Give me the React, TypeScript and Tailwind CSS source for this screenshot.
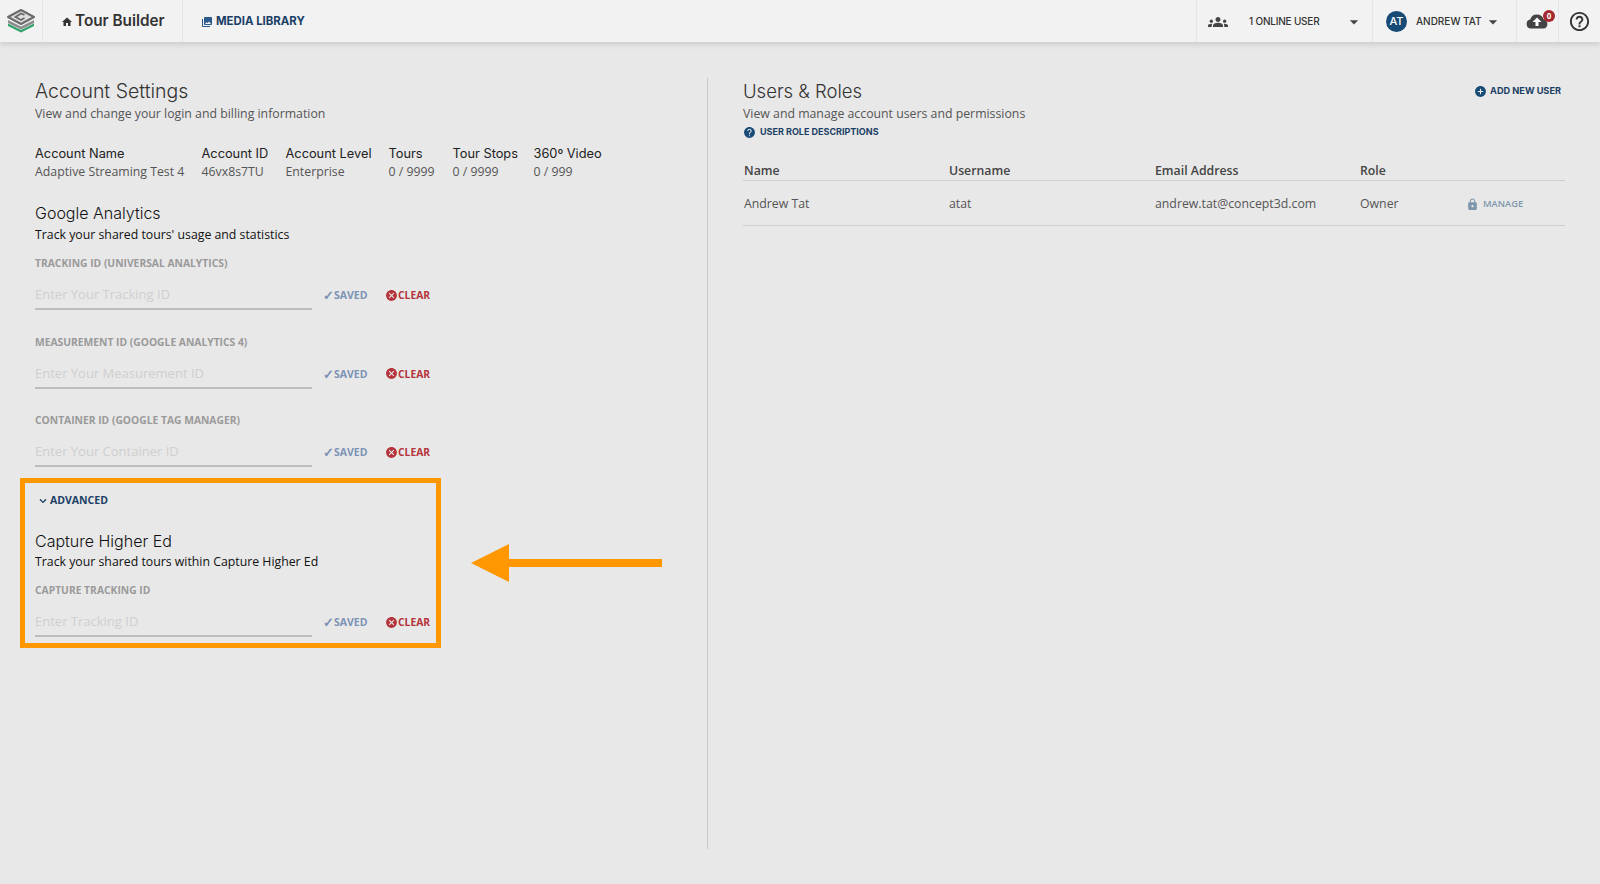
import React from "react";
import { MdHome, MdPhotoLibrary, MdGroups, MdArrowDropDown, MdAddCircle, MdHelp, MdLock, MdCancel, MdHelpOutline } from "react-icons/md";
import { FaChevronDown } from "react-icons/fa";

const OPEN = "font-['Open_Sans',sans-serif]";
const HEAD = "font-['Inter',sans-serif]";

function Logo() {
  return (
    <svg width="28" height="24" viewBox="0 0 28 24">
      <path d="M1 14.5 14 21l13-6.500V17L14 23.500 1 17z" fill="#2fa36b" />
      <path d="M1 11 14 17.500 27 11v3L14 20.500 1 14z" fill="#8d8d8d" />
      <path d="M14 1 27 8 14 15 1 8z" fill="#dfdfdf" stroke="#6a6a6a" strokeWidth="2" strokeLinejoin="round" />
      <path d="M17.500 6 14 4.500 8.500 8l5.500 3 3.500-2" fill="none" stroke="#6a6a6a" strokeWidth="1.800" />
    </svg>
  );
}

function Stat({ label, value, className }: { label: string; value: string; className: string }) {
  return (
    <div className={className}>
      <div className={`${HEAD} text-[12.800px] leading-[18px] text-[#222]`}>{label}</div>
      <div className={`${OPEN} text-[12.300px] leading-[18px] text-[#555]`}>{value}</div>
    </div>
  );
}

function Field({ label, placeholder }: { label: string; placeholder: string }) {
  return (
    <div>
      <div className={`${OPEN} text-[10.300px] leading-[14px] font-bold text-[#9a9a9a]`}>{label}</div>
      <div className="flex items-end mt-[12px]">
        <div className={`${OPEN} w-[277px] h-[28px] border-b-2 border-[#bdbdbd] text-[13px] leading-[25px] text-[#cfcfcf]`}>{placeholder}</div>
        <div className={`${OPEN} flex items-center ml-[11px] mb-[8px] w-[62px] text-[10.500px] leading-[14px] font-bold text-[#7c93b5]`}>
          <span className="text-[13px] leading-[14px]">✓</span>SAVED
        </div>
        <div className={`${OPEN} flex items-center mb-[8px] text-[10.300px] leading-[14px] font-bold text-[#b5343c]`}>
          <MdCancel size={13} />CLEAR
        </div>
      </div>
    </div>
  );
}

export default function App() {
  return (
    <div className="relative h-[884px] bg-[#e8e8e8] overflow-hidden flex flex-col">
      <header className="h-[42px] shrink-0 bg-[#f2f2f2] shadow-[0_2px_6px_rgba(0,0,0,0.14)] flex items-stretch">
        <div className="w-[43px] border-r border-[#e6e6e6] flex items-center justify-center pr-[1px]"><Logo /></div>
        <div className={`${HEAD} w-[140px] border-r border-[#e6e6e6] flex items-center pl-[18px] pt-[1px] text-[15.300px] font-semibold text-[#333]`}>
          <MdHome size={12} className="mr-[2px]" />Tour Builder
        </div>
        <div className={`${HEAD} flex items-center pl-[18px] pt-[2px] text-[11.400px] font-bold text-[#1c3f66]`}>
          <MdPhotoLibrary size={12} className="mr-[3px] text-[#2a5b8c]" />MEDIA LIBRARY
        </div>
        <div className="flex-1" />
        <div className={`${HEAD} w-[176px] border-l border-[#e6e6e6] flex items-center pl-[11px] pt-[1px] text-[10px] tracking-[-0.2px] font-medium text-[#333]`}>
          <MdGroups size={20} className="text-[#444]" />
          <span className="ml-[21px]">1 ONLINE USER</span>
          <MdArrowDropDown size={20} className="ml-auto mr-[8px] text-[#444]" />
        </div>
        <div className={`${HEAD} w-[144px] border-l border-[#e6e6e6] flex items-center pl-[13px] pt-[1px] text-[10px] font-medium text-[#333]`}>
          <div className="w-[21px] h-[21px] rounded-full bg-[#174a75] text-white flex items-center justify-center text-[11px] font-medium">AT</div>
          <span className="ml-[9px]">ANDREW TAT</span>
          <MdArrowDropDown size={20} className="ml-[1px] text-[#444]" />
        </div>
        <div className="w-[42px] border-l border-[#e6e6e6] relative flex items-center pl-[9px]">
          <svg width="23" height="16" viewBox="0 0 23 16">
            <path d="M5 15.500a4.500 4.500 0 0 1-.8-8.900A7 7 0 0 1 17.500 6.200 4.800 4.800 0 0 1 18 15.500z" fill="#444" />
            <path d="M11 4.500l4.500 4.500h-3v4h-3V9h-3z" fill="#fff" />
          </svg>
          <span className={`${OPEN} absolute left-[26px] top-[10px] w-[12px] h-[12px] rounded-full bg-[#a5282e] text-white text-[8px] font-bold leading-[12px] text-center`}>0</span>
        </div>
        <div className="w-[42px] border-l border-[#e6e6e6] flex items-center pl-[9px]">
          <MdHelpOutline size={23} className="text-[#333]" />
        </div>
      </header>

      <main className="flex-1 flex pt-[36px] pb-[35px]">
        <section className="w-[708px] shrink-0 border-r border-[#c9c9c9] pl-[35px]">
          <h1 className={`${HEAD} text-[19.500px] leading-[26px] font-light text-[#333]`}>Account Settings</h1>
          <p className={`${OPEN} text-[12.300px] leading-[20px] text-[#555]`}>View and change your login and billing information</p>
          <div className="flex mt-[21px]">
            <Stat className="w-[166.500px]" label="Account Name" value="Adaptive Streaming Test 4" />
            <Stat className="w-[84px]" label="Account ID" value="46vx8s7TU" />
            <Stat className="w-[103px]" label="Account Level" value="Enterprise" />
            <Stat className="w-[64px]" label="Tours" value="0 / 9999" />
            <Stat className="w-[81px]" label="Tour Stops" value="0 / 9999" />
            <Stat className="w-[80px]" label="360º Video" value="0 / 999" />
          </div>
          <h2 className={`${HEAD} mt-[21px] text-[16px] leading-[22px] font-light text-[#111]`}>Google Analytics</h2>
          <p className={`${OPEN} mt-[1px] text-[12.300px] leading-[20px] text-[#111]`}>Track your shared tours' usage and statistics</p>
          <div className="mt-[11px] flex flex-col gap-[24.500px]">
            <Field label="TRACKING ID (UNIVERSAL ANALYTICS)" placeholder="Enter Your Tracking ID" />
            <Field label="MEASUREMENT ID (GOOGLE ANALYTICS 4)" placeholder="Enter Your Measurement ID" />
            <Field label="CONTAINER ID (GOOGLE TAG MANAGER)" placeholder="Enter Your Container ID" />
          </div>

          <div className="relative -ml-[15px] mt-[11px] w-[421px] h-[170px] border-[5px] border-[#ff9800] pl-[10px] pt-[11px]">
            <div className={`${OPEN} flex items-center h-[14px] text-[10.500px] font-bold text-[#1c3f66]`}>
              <FaChevronDown size={8} className="ml-[4px] mr-[3px]" />ADVANCED
            </div>
            <h2 className={`${HEAD} mt-[22px] text-[16px] leading-[22px] font-light text-[#111]`}>Capture Higher Ed</h2>
            <p className={`${OPEN} text-[12.300px] leading-[20px] text-[#111]`}>Track your shared tours within Capture Higher Ed</p>
            <div className="mt-[11px]">
              <Field label="CAPTURE TRACKING ID" placeholder="Enter Tracking ID" />
            </div>
            <svg className="absolute left-[446px] top-[61px]" width="195" height="40" viewBox="0 0 195 40">
              <path d="M0 19 38 0v15h153v8H38v15z" fill="#ff9800" />
            </svg>
          </div>
        </section>

        <section className="flex-1 pl-[35px] pr-[35px]">
          <div className="flex justify-between">
            <h1 className={`${HEAD} text-[18.500px] leading-[26px] font-light text-[#333]`}>Users &amp; Roles</h1>
            <div className={`${HEAD} flex items-center h-[26px] text-[9.200px] font-bold text-[#1c3f66] mr-[4px]`}>
              <MdAddCircle size={13} className="mr-[3px] text-[#174a75]" />ADD NEW USER
            </div>
          </div>
          <p className={`${OPEN} text-[12.300px] leading-[20px] text-[#555]`}>View and manage account users and permissions</p>
          <div className={`${HEAD} flex items-center h-[16px] text-[9px] font-bold text-[#1c3f66]`}>
            <MdHelp size={13} className="mr-[4px] text-[#174a75]" />USER ROLE DESCRIPTIONS
          </div>
          <div className={`${OPEN} mt-[22px] grid grid-cols-[205px_206px_205px_1fr] h-[19px] border-b border-[#cfcfcf] pl-[1px] text-[12.300px] leading-[18px] font-semibold text-[#444]`}>
            <div>Name</div><div>Username</div><div>Email Address</div><div>Role</div>
          </div>
          <div className={`${OPEN} grid grid-cols-[205px_206px_205px_106px_1fr] items-center h-[45px] pt-[2px] border-b border-[#cfcfcf] pl-[1px] text-[12.300px] text-[#555]`}>
            <div>Andrew Tat</div><div>atat</div><div>andrew.tat@concept3d.com</div><div>Owner</div>
            <div className="flex items-center text-[9.300px] font-semibold text-[#7f97ad]">
              <MdLock size={13} className="mr-[4px]" />MANAGE
            </div>
          </div>
        </section>
      </main>
    </div>
  );
}
